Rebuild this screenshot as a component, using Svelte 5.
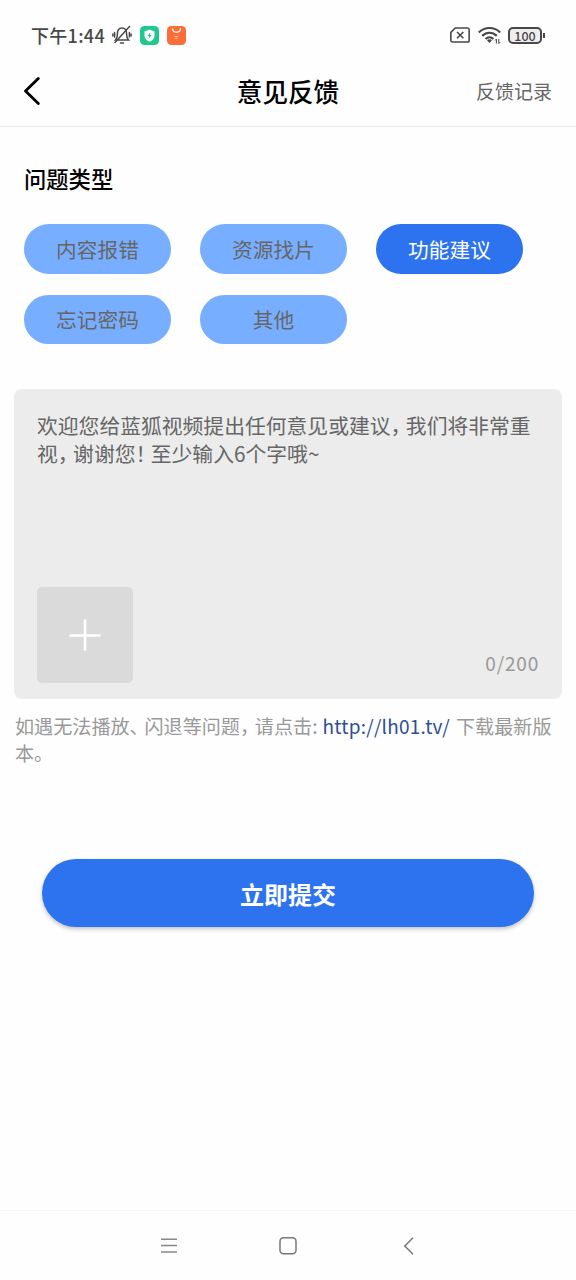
<script>
    const types = ['内容报错', '资源找片', '功能建议', '忘记密码', '其他']
    let selected = '功能建议'
    let content = ''
</script>

<div class="page">
    <div class="status">
        <span class="time">下午1:44</span>
        <svg class="bell" width="20" height="20" viewBox="0 0 20 20" fill="none" stroke="#484848" stroke-width="1.5" stroke-linecap="round">
            <path d="M3.500 15h13c-1.500-1.500-1.900-2.600-1.900-6C14.600 5.300 12.800 3 10 3S5.400 5.300 5.400 9c0 3.400-.4 4.500-1.900 6zM8.500 18h3M2.600 7.500v4.500M.9 9v2M17.400 7.500v4.500M19.100 9v2" />
            <path d="M3 17.500L17.500 1.500" />
        </svg>
        <svg class="shield" width="19" height="19" viewBox="0 0 19 19">
            <rect width="19" height="19" rx="4.500" fill="#1ec98d" />
            <path d="M9.500 3.600l5 1.800v4.200c0 3-2 5-5 6.200-3-1.200-5-3.200-5-6.200V5.400z" fill="#fff" />
            <path d="M10.300 6.500L7.400 10h1.800l-.5 2.700 2.900-3.600H9.800z" fill="#1ec98d" />
        </svg>
        <svg class="bag" width="19" height="19" viewBox="0 0 19 19">
            <rect width="19" height="19" rx="4.500" fill="#ff6d37" />
            <path d="M5.500 2.800c.4 4.600 7.600 4.600 8 0" fill="none" stroke="#fff" stroke-width="1.300" stroke-linecap="round" />
            <path d="M7.500 10.500h3.500M7.800 12.300h2.700" stroke="#ffc7b0" stroke-width="1" />
        </svg>
        <svg class="sim" width="20" height="16" viewBox="0 0 19 15" fill="none" stroke="#484848" stroke-width="1.500">
            <path d="M5 .8h11.500a1.700 1.700 0 0 1 1.700 1.700v10a1.700 1.700 0 0 1-1.700 1.700h-14A1.700 1.700 0 0 1 .8 12.500V5z" />
            <path d="M6.700 4.600l6 6M12.700 4.600l-6 6" />
        </svg>
        <svg class="wifi" width="23" height="19" viewBox="0 0 23 19" fill="none" stroke="#484848" stroke-width="2.200">
            <path d="M.8 6.500c6-6 15.400-6 21.400 0M4.200 9.900c4.200-4.200 10.400-4.200 14.600 0M7.600 13c2.300-2.200 5.500-2.200 7.800 0" />
            <path d="M9 14.300c1.500-1.300 3.500-1.300 5 0L11.500 17z" fill="#484848" stroke="none" />
            <path d="M18.400 17.500V13l-1.400 1.500M20.800 13v4.500l1.400-1.500" stroke-width="1" />
        </svg>
        <span class="battery">100</span>
        <span class="cap"></span>
    </div>

    <header>
        <svg width="18" height="30" viewBox="0 0 18 30" fill="none" stroke="#000" stroke-width="2.800" stroke-linecap="round" stroke-linejoin="round">
            <path d="M14.300 2.500L1.500 15l12.800 12.500" />
        </svg>
        <h1>意见反馈</h1>
        <span class="record">反馈记录</span>
    </header>

    <main>
        <h2>问题类型</h2>
        <div class="types">
            {#each types as type}
            <button class:active={type === selected} on:click={() => selected = type}>{type}</button>
            {/each}
        </div>

        <div class="box">
            <p class="placeholder">
                欢迎您给蓝狐视频提出任何意见或建议<i>，</i>我们将非常重<br>视<i>，</i>谢谢您<i>！</i>至少输入<span class="num">6</span>个字哦~
            </p>
            <div class="bottom">
                <div class="upload">
                    <svg width="32" height="32" viewBox="0 0 32 32" stroke="#fff" stroke-width="2.600">
                        <path d="M16 .5v31M.5 16.500h31" />
                    </svg>
                </div>
                <span class="count">{content.length}/200</span>
            </div>
        </div>

        <p class="hint">
            如遇无法播放<i>、</i>闪退等问题<i>，</i>请点击<span class="colon">:</span><a href="http://lh01.tv/">http://lh01.tv/</a>下载最新版<br>本。
        </p>

        <button class="submit">立即提交</button>
    </main>

    <nav>
        <svg width="18" height="18" viewBox="0 0 18 18" stroke="#888" stroke-width="1.500">
            <path d="M1 2.200h16M1 8.500h16M1 15h16" />
        </svg>
        <svg width="18" height="18" viewBox="0 0 18 18" fill="none" stroke="#777" stroke-width="1.500">
            <rect x="1" y=".8" width="16" height="16" rx="3.500" />
        </svg>
        <svg width="18" height="18" viewBox="0 0 18 18" fill="none" stroke="#777" stroke-width="1.500">
            <path d="M15 .8L6.800 9l8.200 8.200" />
        </svg>
    </nav>
</div>

<style>
    :global(body) {
        margin: 0;
        background: #fff;
    }

    .page {
        width: 576px;
        height: 1280px;
        display: flex;
        flex-direction: column;
        overflow: hidden;
        background: #fefefe;
        font-family: 'Noto Sans CJK SC', sans-serif;
        white-space: nowrap;
    }

    .page * {
        box-sizing: border-box;
    }

    .status {
        height: 56px;
        padding: 14px 31px 0 31px;
        display: flex;
        align-items: center;
        color: #484848;
    }

    .time {
        width: 81px;
        font-size: 18px;
        font-weight: 500;
        letter-spacing: 0.3px;
    }

    .shield {
        margin-left: 8px;
    }

    .bag {
        margin-left: 8px;
    }

    .sim {
        margin-left: auto;
    }

    .wifi {
        margin-left: 8px;
    }

    .battery {
        width: 34px;
        height: 17px;
        margin-left: 7px;
        border: 2px solid #484848;
        border-radius: 5px;
        background: #eee;
        font-size: 12.5px;
        font-weight: 500;
        line-height: 13px;
        text-align: center;
    }

    .cap {
        width: 2px;
        height: 5px;
        margin-left: 1px;
        background: #484848;
    }

    header {
        height: 71px;
        padding: 0 24px 0 24px;
        display: grid;
        grid-template-columns: 1fr auto 1fr;
        align-items: center;
        border-bottom: 1px solid #ececec;
    }

    h1 {
        margin: 0;
        font-size: 25.6px;
        font-weight: 500;
        line-height: 36px;
    }

    .record {
        justify-self: end;
        padding-bottom: 2px;
        font-size: 19px;
        color: #666;
    }

    main {
        flex: 1;
        padding: 0 14px;
    }

    h2 {
        margin: 35px 10px 29px;
        font-size: 22.3px;
        font-weight: 500;
        line-height: 33px;
    }

    .types {
        display: grid;
        grid-template-columns: repeat(3, 147px);
        gap: 21px 29px;
        margin: 0 10px 45px;
    }

    button {
        border: none;
        padding: 0;
        font-family: inherit;
    }

    .types button {
        height: 49.5px;
        border-radius: 25px;
        background: #78aeff;
        color: #666;
        font-size: 20.7px;
    }

    .types .active {
        background: #2d73ef;
        color: #fff;
    }

    .box {
        height: 310px;
        padding: 22px 23px 16px;
        display: flex;
        flex-direction: column;
        justify-content: space-between;
        border-radius: 8px;
        background: #ececec;
    }

    .placeholder {
        margin: 0;
        font-size: 20.8px;
        line-height: 28px;
        color: #666;
    }

    i {
        font-style: normal;
        letter-spacing: -5.5px;
    }

    .bottom {
        display: flex;
        align-items: flex-end;
        justify-content: space-between;
    }

    .upload {
        width: 96px;
        height: 96px;
        display: flex;
        align-items: center;
        justify-content: center;
        border-radius: 5px;
        background: #dadada;
    }

    .count {
        font-size: 19px;
        line-height: 40px;
        letter-spacing: 0.8px;
        color: #999;
    }

    .hint {
        margin: 14px 0 0 1px;
        font-size: 19.1px;
        line-height: 26.5px;
        color: #999;
    }

    .hint i {
        letter-spacing: -4.2px;
    }

    .colon {
        margin-right: 5px;
    }

    a {
        margin-right: 6px;
        font-size: 19px;
        letter-spacing: 0.25px;
        color: #2f4f93;
        text-decoration: none;
    }

    .submit {
        display: block;
        width: 492px;
        height: 68px;
        margin: 93px auto 0;
        border-radius: 34px;
        background: #2d73ef;
        box-shadow: 0 2px 4px rgba(0, 0, 0, 0.25);
        color: #fff;
        font-size: 24px;
        font-weight: 700;
    }

    nav {
        height: 70px;
        padding: 0 160px;
        display: flex;
        align-items: center;
        justify-content: space-between;
        border-top: 1px solid #f5f5f5;
    }
</style>
